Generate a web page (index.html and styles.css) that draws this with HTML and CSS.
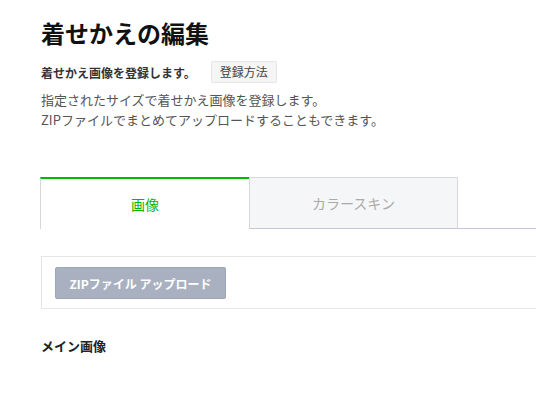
FILE: index.html
```html
<!DOCTYPE html>
<html lang="ja">

<head>
    <meta charset="utf-8">
    <title>着せかえの編集</title>
    <link rel="stylesheet" href="styles.css">
</head>

<body>
    <main class="page">
        <h1 class="page-title">着せかえの編集</h1>

        <div class="lead">
            <strong>着せかえ画像を登録します。</strong>
            <button class="btn-help">登録方法</button>
        </div>
        <p class="desc">指定されたサイズで着せかえ画像を登録します。<br>ZIPファイルでまとめてアップロードすることもできます。</p>

        <ul class="tabs">
            <li class="tab active">画像</li>
            <li class="tab">カラースキン</li>
            <li class="tab-rest"></li>
        </ul>

        <div class="upload-box">
            <button class="btn-zip">ZIPファイル アップロード</button>
        </div>

        <h2 class="section-title">メイン画像</h2>
    </main>
</body>

</html>
```

FILE: styles.css
```css
html, body {
    margin: 0;
    padding: 0;
    overflow: hidden;
    background: #fff;
}

body {
    font-family: "Noto Sans CJK JP", "Noto Sans", sans-serif;
    color: #333;
    font-size: 13px;
}

.page {
    width: 620px;
    padding: 16px 0 0 40px;
}

.page-title {
    margin: 0 0 0 1px;
    font-size: 24px;
    line-height: 34px;
    font-weight: 700;
    color: #111;
}

.lead {
    display: flex;
    align-items: center;
    gap: 15px;
    margin: 11px 0 0 1px;
}

.lead strong {
    font-size: 12px;
    font-weight: 700;
    color: #333;
}

.btn-help {
    font-family: inherit;
    font-size: 12px;
    color: #444;
    background: #f5f5f5;
    border: 1px solid #e6e6e6;
    border-radius: 2px;
    height: 22px;
    width: 66px;
    padding: 0;
    line-height: 18px;
}

.desc {
    margin: 7px 0 0 1px;
    font-size: 13px;
    line-height: 20px;
    color: #555;
}

.tabs {
    display: flex;
    list-style: none;
    margin: 47px 0 0;
    padding: 0;
    height: 52px;
}

.tab {
    width: 209px;
    box-sizing: border-box;
    display: flex;
    align-items: center;
    justify-content: center;
    font-size: 14px;
    color: #aaa;
    background: #f5f6f8;
    border: 1px solid #d8d8dc;
    border-bottom-color: #c6c6ce;
    height: 52px;
}

.tab.active {
    color: #00b900;
    background: #fff;
    border: none;
    border-left: 1px solid #d8d8d8;
    border-top: 2px solid #00b900;
}

.tab + .tab {
    border-left: none;
}

.tab.active + .tab {
    border-left: 1px solid #d8d8dc;
    height: 52px;
}

.tab-rest {
    flex: 1;
    border-bottom: 1px solid #c6c6ce;
    height: 51px;
}

.upload-box {
    margin: 27px 0 0 1px;
    border: 1px solid #e6e6e6;
    padding: 10px 13px 9px;
}

.btn-zip {
    font-family: inherit;
    font-size: 12px;
    font-weight: 700;
    color: #fff;
    background: #a9b1c1;
    border: 1px solid #9ea6b5;
    border-radius: 2px;
    width: 171px;
    height: 32px;
    padding: 0;
}

.section-title {
    margin: 27px 0 0 1px;
    font-size: 13px;
    font-weight: 700;
    color: #222;
}
```
